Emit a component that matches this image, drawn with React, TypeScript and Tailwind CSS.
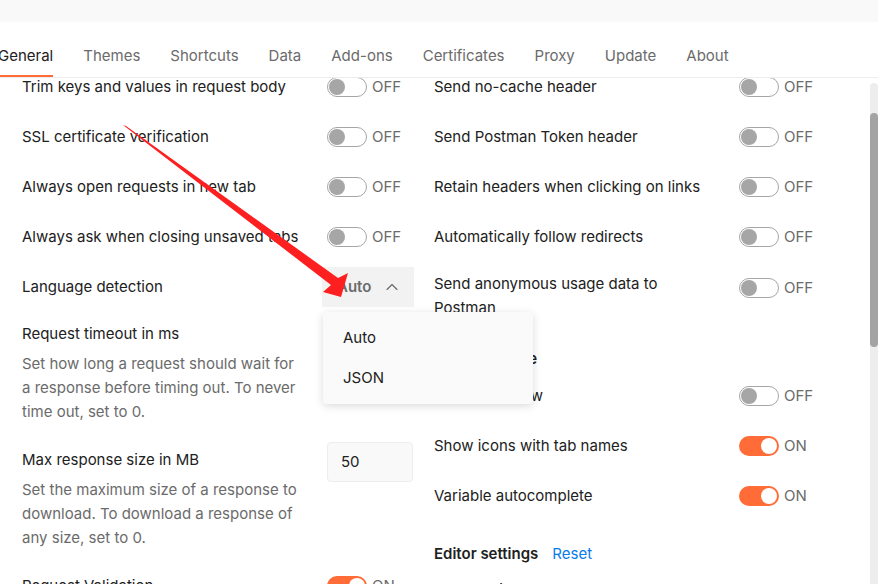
import React from 'react'
import { ChevronUp } from 'lucide-react'

const tabs = ['General', 'Themes', 'Shortcuts', 'Data', 'Add-ons', 'Certificates', 'Proxy', 'Update', 'About']

const Toggle = ({ on }: { on: boolean }) => (
    <div className="flex items-center gap-[5px]">
        {on ? (
            <div className="w-[40px] h-[20px] rounded-full bg-[#ff6c37] flex items-center justify-end px-[2px]">
                <div className="w-[16px] h-[16px] rounded-full bg-white" />
            </div>
        ) : (
            <div className="w-[40px] h-[20px] rounded-full border border-[#a6a6a6] flex items-center px-[1px]">
                <div className="w-[16px] h-[16px] rounded-full bg-[#a6a6a6]" />
            </div>
        )}
        <span className="text-[15px] text-[#6b6b6b]">{on ? 'ON' : 'OFF'}</span>
    </div>
)

const ToggleRow = ({ label, on = false }: { label: string, on?: boolean }) => (
    <div className="flex items-center h-[50px]">
        <div className="w-[305px] pr-[25px] text-[15px] text-[#212121]">{label}</div>
        <Toggle on={on} />
    </div>
)

const InputRow = ({ label, desc, value, pt }: { label: string, desc: string, value: string, pt: string }) => (
    <div className={`flex items-start ${pt} pb-[11px]`}>
        <div className="w-[305px] pr-[25px]">
            <div className="text-[15px] leading-6 text-[#212121]">{label}</div>
            <div className="mt-[6px] text-[15px] leading-6 text-[#6b6b6b]">{desc}</div>
        </div>
        <div className="mt-[-6px] w-[86px] h-[40px] rounded-[4px] border border-[#ededed] bg-[#f9f9f9] flex items-center pl-[13px] text-[15px] text-[#212121]">
            {value}
        </div>
    </div>
)

const App = () => {
    return (
        <div className="relative w-full h-[584px] flex flex-col overflow-hidden bg-white font-['Inter','Noto_Sans',sans-serif]">
            {/* top strip */}
            <div className="h-[22px] bg-[#f9f9f9] shrink-0" />

            {/* tabs */}
            <div className="h-[56px] shrink-0 flex items-end gap-[30px] border-b border-[#ededed]">
                {tabs.map((t, i) => (
                    <div
                        key={t}
                        className={`pb-[9px] border-b-2 text-[15px] leading-5 ${i === 0 ? 'ml-[-2px] border-[#ff6c37] text-[#212121]' : 'border-transparent text-[#6b6b6b]'}`}
                    >
                        {t}
                    </div>
                ))}
            </div>

            {/* content */}
            <div className="flex-1 flex overflow-hidden">
                <div className="flex-1 overflow-hidden">
                    <div className="mt-[-16px] pl-[22px] flex gap-[20px]">
                        {/* left column */}
                        <div className="w-[392px] flex flex-col">
                            <ToggleRow label="Trim keys and values in request body" />
                            <ToggleRow label="SSL certificate verification" />
                            <ToggleRow label="Always open requests in new tab" />
                            <ToggleRow label="Always ask when closing unsaved tabs" />
                            <div className="flex items-center h-[50px]">
                                <div className="w-[305px] pr-[25px] text-[15px] text-[#212121]">Language detection</div>
                                <div className="relative ml-[-5px]">
                                    <div className="w-[92px] h-[40px] bg-[#f2f2f2] flex items-center justify-between pl-[15px] pr-[12px]">
                                        <span className="text-[15px] font-semibold text-[#6b6b6b]">Auto</span>
                                        <ChevronUp size={20} strokeWidth={1.4} color="#6b6b6b" />
                                    </div>
                                    <div className="absolute z-10 top-[45px] left-[1px] w-[210px] py-[6px] rounded-[4px] bg-[#fafafa] shadow-[0_2px_8px_rgba(0,0,0,0.15)]">
                                        <div className="h-[40px] flex items-center pl-[20px] text-[15px] text-[#212121]">Auto</div>
                                        <div className="h-[40px] flex items-center pl-[20px] text-[15px] text-[#212121]">JSON</div>
                                    </div>
                                </div>
                            </div>
                            <InputRow
                                pt="pt-[10px]"
                                label="Request timeout in ms"
                                desc="Set how long a request should wait for a response before timing out. To never time out, set to 0."
                                value="0"
                            />
                            <InputRow
                                pt="pt-[13px]"
                                label="Max response size in MB"
                                desc="Set the maximum size of a response to download. To download a response of any size, set to 0."
                                value="50"
                            />
                            <ToggleRow label="Request Validation" on />
                        </div>

                        {/* right column */}
                        <div className="w-[392px] flex flex-col">
                            <ToggleRow label="Send no-cache header" />
                            <ToggleRow label="Send Postman Token header" />
                            <ToggleRow label="Retain headers when clicking on links" />
                            <ToggleRow label="Automatically follow redirects" />
                            <div className="flex items-start pt-[10px] pb-[10px]">
                                <div className="w-[305px] pr-[25px] text-[15px] leading-6 text-[#212121]">Send anonymous usage data to Postman</div>
                                <div className="mt-[5px]">
                                    <Toggle on={false} />
                                </div>
                            </div>
                            <div className="mt-[17px] text-[15px] leading-6 font-semibold text-[#212121]">User interface</div>
                            <ToggleRow label="Two-pane view" />
                            <ToggleRow label="Show icons with tab names" on />
                            <ToggleRow label="Variable autocomplete" on />
                            <div className="mt-[21px] flex items-center gap-[14px] text-[15px] leading-6">
                                <span className="font-semibold text-[#212121]">Editor settings</span>
                                <span className="text-[#097bed]">Reset</span>
                            </div>
                            <div className="mt-[12px] text-[15px] leading-6 text-[#212121]">Font Family</div>
                        </div>
                    </div>
                </div>

                {/* scrollbar */}
                <div className="w-[8px] shrink-0 pt-[5px] flex flex-col">
                    <div className="flex-1 rounded-t-full bg-[#ededed]">
                        <div className="mt-[30px] h-[234px] rounded-full bg-[#a3a3a3]" />
                    </div>
                </div>
            </div>

            {/* annotation arrow */}
            <svg className="absolute inset-0 w-full h-full pointer-events-none z-20" viewBox="0 0 878 584">
                <polygon
                    points="123,125 126,126 338,278 348,273 341,297 323,292 331,285"
                    fill="#fe2020"
                />
            </svg>
        </div>
    )
}

export default App
